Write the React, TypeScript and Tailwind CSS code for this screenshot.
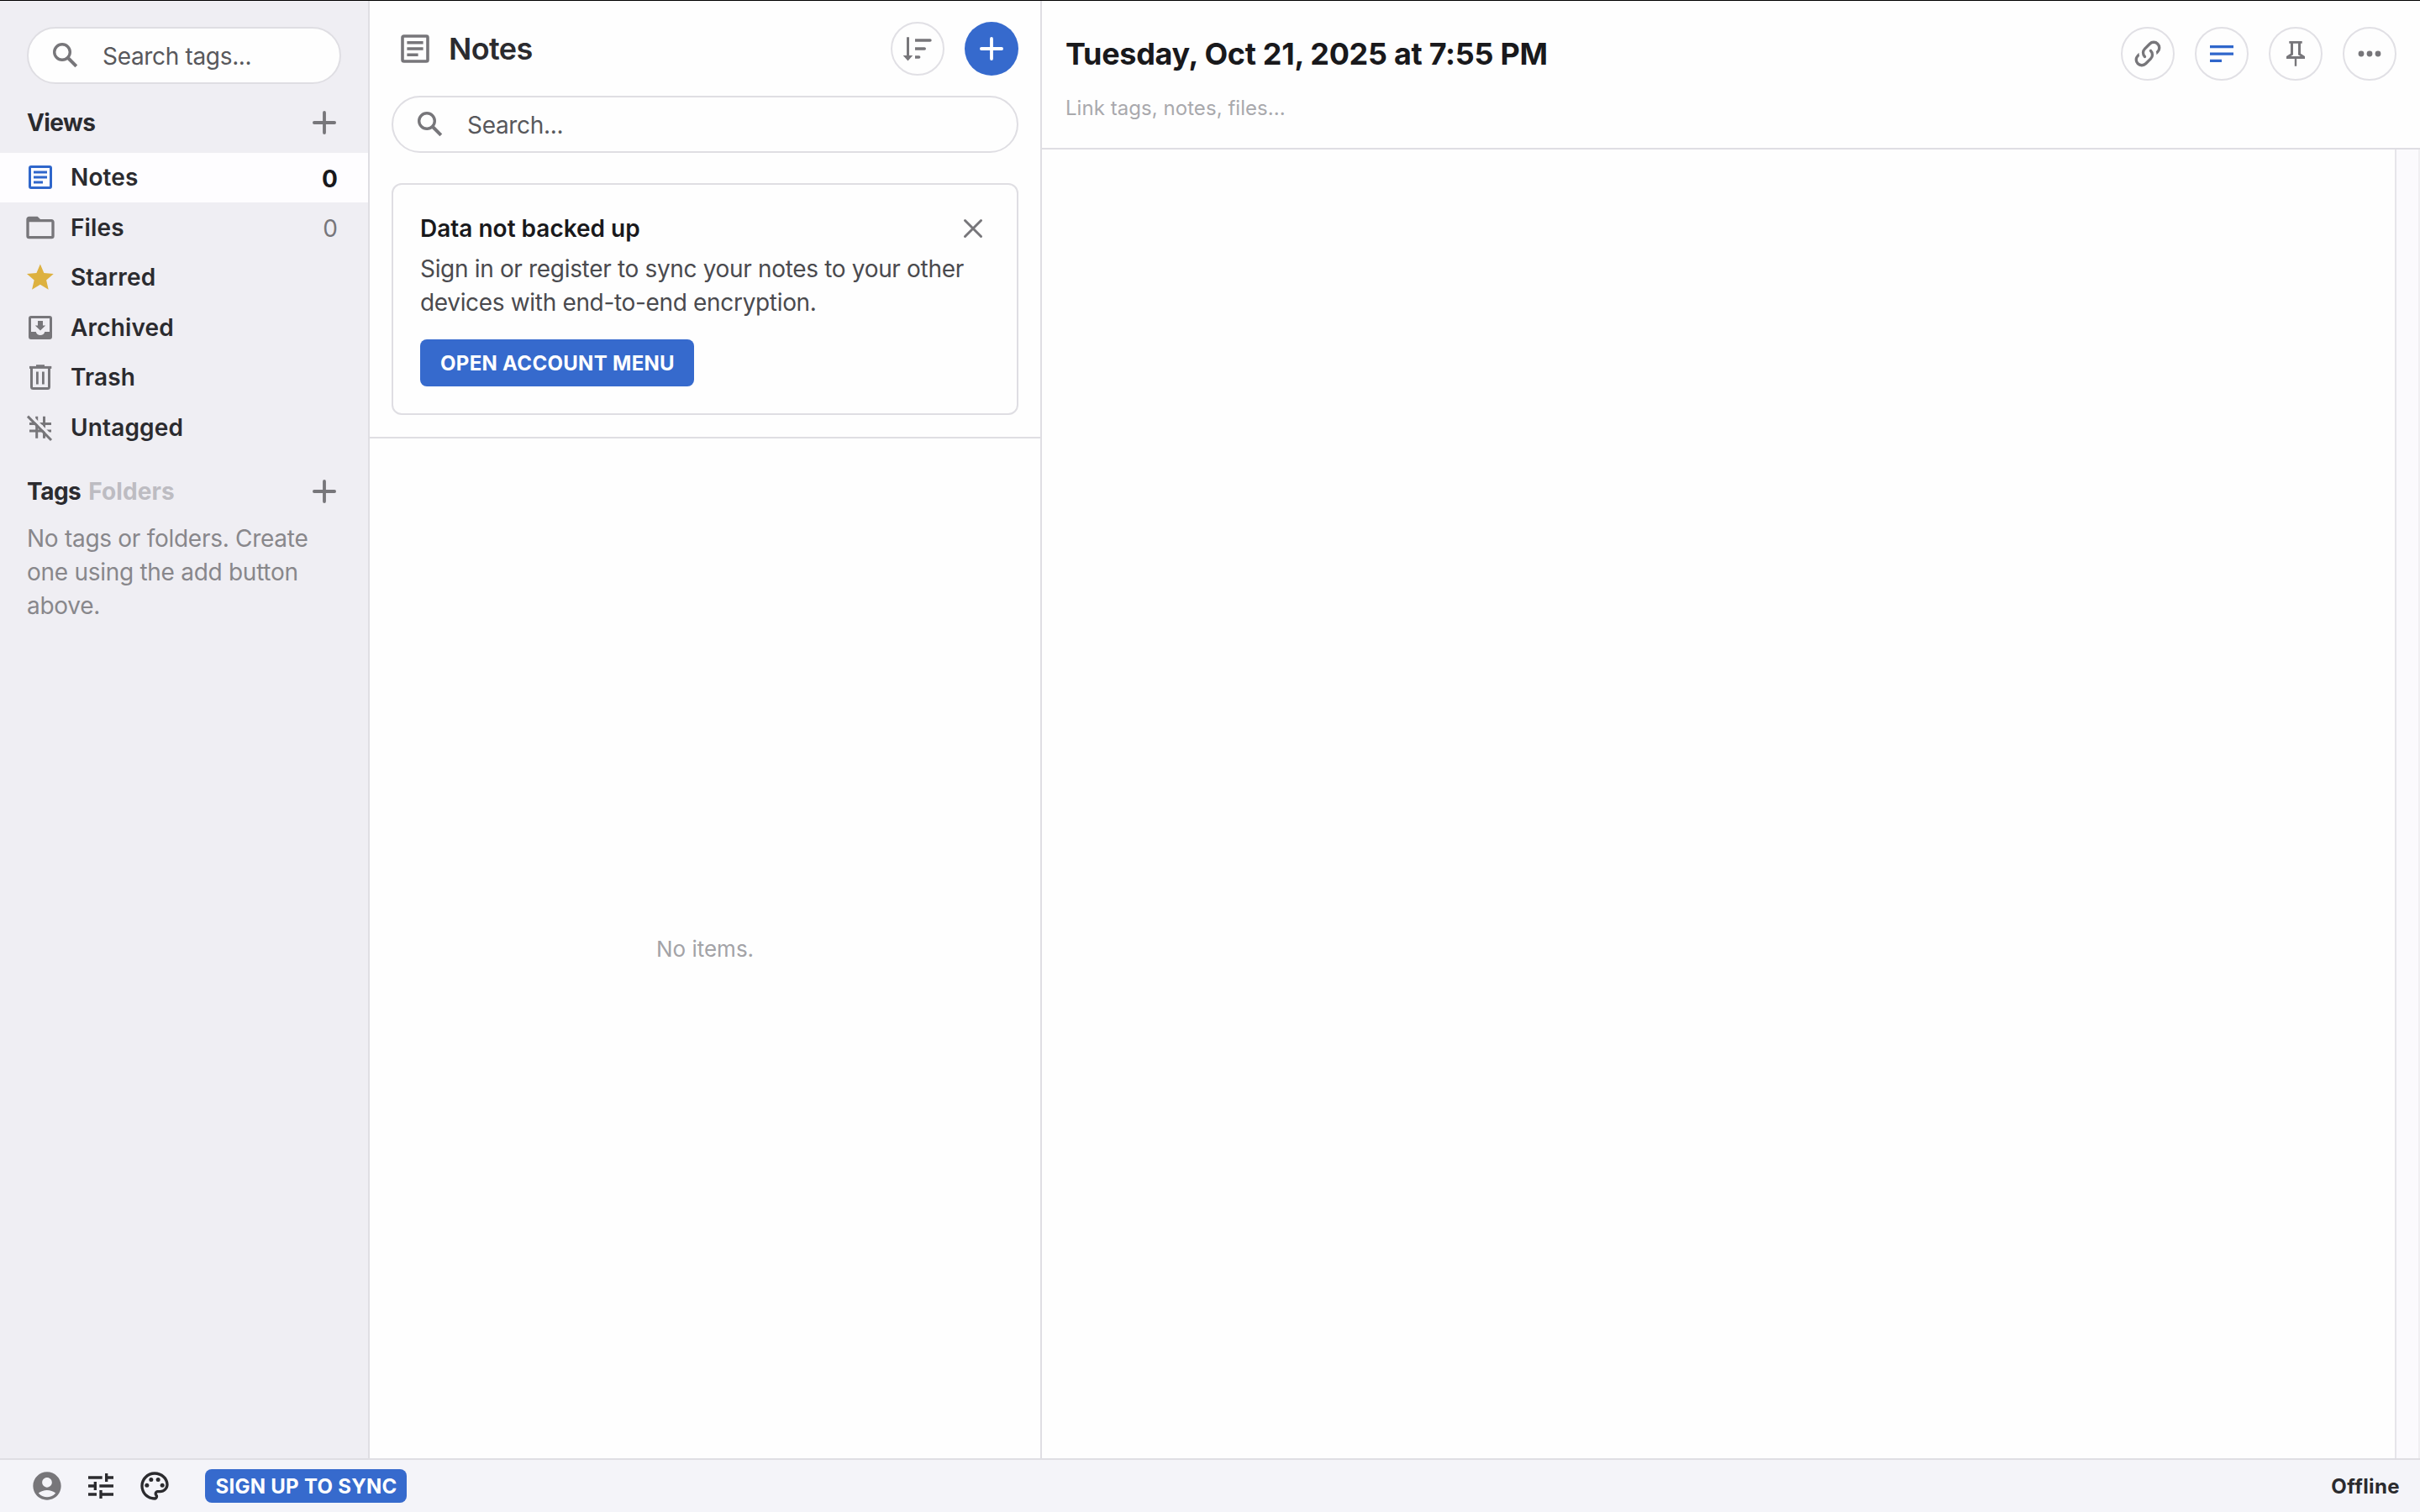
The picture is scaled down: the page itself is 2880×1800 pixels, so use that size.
import React from 'react';
import { MdAccountCircle, MdOutlinePalette, MdTune } from 'react-icons/md';

interface IconProps {
  className?: string;
}

const NotesIcon: React.FC<IconProps> = ({ className }) => (
  <svg viewBox="0 0 40 40" className={className} fill="none" stroke="currentColor">
    <rect x="7.5" y="7.5" width="25" height="25" rx="1.5" strokeWidth="3" />
    <path d="M12 14h16M12 20h16M12 26h11" strokeWidth="2.8" />
  </svg>
);

const FolderIcon: React.FC<IconProps> = ({ className }) => (
  <svg viewBox="0 0 24 24" className={className} fill="currentColor">
    <path d="M20 18H4V8h16m0-2h-8l-2-2H4c-1.11 0-2 .89-2 2v12a2 2 0 0 0 2 2h16a2 2 0 0 0 2-2V8c0-1.11-.9-2-2-2z" />
  </svg>
);

const StarIcon: React.FC<IconProps> = ({ className }) => (
  <svg viewBox="0 0 40 40" className={className} fill="currentColor">
    <path
      transform="translate(0.8 1.4) scale(1.59)"
      d="M12 17.27 18.18 21l-1.64-7.03L22 9.24l-7.19-.61L12 2 9.19 8.63 2 9.24l5.46 4.73L5.82 21z"
    />
  </svg>
);

const ArchiveIcon: React.FC<IconProps> = ({ className }) => (
  <svg viewBox="0 0 40 40" className={className} fill="currentColor">
    <path
      fillRule="evenodd"
      d="M9 6h22a3 3 0 0 1 3 3v22a3 3 0 0 1-3 3H9a3 3 0 0 1-3-3V9a3 3 0 0 1 3-3zm0 3v16h5.7a5.5 5.5 0 0 0 10.6 0H31V9z"
    />
    <path d="M17 12h6v5.5h3.2L20 23.6l-6.2-6.1H17z" />
  </svg>
);

const TrashIcon: React.FC<IconProps> = ({ className }) => (
  <svg viewBox="0 0 40 40" className={className} fill="none" stroke="currentColor">
    <path d="M7 8.4h26.3" strokeWidth="3" />
    <path d="M15 6.4h10" strokeWidth="2.4" />
    <path d="M9.5 9v22.5a2 2 0 0 0 2 2h17a2 2 0 0 0 2-2V9" strokeWidth="3" />
    <path d="M16.4 13.6v15M23.4 13.6v15" strokeWidth="2.8" />
  </svg>
);

const UntaggedIcon: React.FC<IconProps> = ({ className }) => (
  <svg viewBox="0 0 40 40" className={className} fill="none" stroke="currentColor" strokeWidth="3">
    <path d="M15.7 6.8v26M24.5 6.8v26M7 15.4h26M7 24h26" />
    <path d="M6.5 3.8l29 29" stroke="#efeef3" strokeWidth="3.4" />
    <path d="M5 6.6l28 28.4" />
  </svg>
);

const SearchIcon: React.FC<IconProps> = ({ className }) => (
  <svg viewBox="0 0 40 40" className={className} fill="none" stroke="currentColor">
    <circle cx="17" cy="16" r="9.3" strokeWidth="3.4" />
    <path d="M24 23l9.8 9.8" strokeWidth="4" />
  </svg>
);

const PlusIcon: React.FC<IconProps> = ({ className }) => (
  <svg viewBox="0 0 28 28" className={className} stroke="currentColor" strokeWidth="3.8" strokeLinecap="round">
    <path d="M14 1.9v24.2M1.9 14h24.2" />
  </svg>
);

const CloseIcon: React.FC<IconProps> = ({ className }) => (
  <svg viewBox="0 0 24 24" className={className} stroke="currentColor" strokeWidth="3" strokeLinecap="round">
    <path d="M2.5 2.5l19 19M21.5 2.5l-19 19" />
  </svg>
);

const SortIcon: React.FC<IconProps> = ({ className }) => (
  <svg viewBox="0 0 40 40" className={className} fill="currentColor">
    <path d="M7 6.3h3V28h4.2L8.5 34.5 2.7 28H7z" />
    <path d="M17 8.2h17.9a1.8 1.8 0 0 1 0 3.6H17zM17 18.2h11.2a1.8 1.8 0 0 1 0 3.6H17zM17 28.2h4.6a1.8 1.8 0 0 1 0 3.6H17z" />
  </svg>
);

const LinkIcon: React.FC<IconProps> = ({ className }) => (
  <svg viewBox="0 0 24 24" className={className} fill="currentColor">
    <path d="M10.59 13.41c.41.39.41 1.03 0 1.42-.39.39-1.03.39-1.42 0a5.003 5.003 0 0 1 0-7.07l3.54-3.54a5.003 5.003 0 0 1 7.07 0 5.003 5.003 0 0 1 0 7.07l-1.49 1.49c.01-.82-.12-1.64-.4-2.42l.47-.48a2.982 2.982 0 0 0 0-4.24 2.982 2.982 0 0 0-4.24 0l-3.53 3.53a2.982 2.982 0 0 0 0 4.24m2.82-4.24c.39-.39 1.03-.39 1.42 0a5.003 5.003 0 0 1 0 7.07l-3.54 3.54a5.003 5.003 0 0 1-7.07 0 5.003 5.003 0 0 1 0-7.07l1.49-1.49c-.01.82.12 1.64.4 2.43l-.47.47a2.982 2.982 0 0 0 0 4.24 2.982 2.982 0 0 0 4.24 0l3.53-3.53a2.982 2.982 0 0 0 0-4.24.973.973 0 0 1 0-1.42z" />
  </svg>
);

const TextLinesIcon: React.FC<IconProps> = ({ className }) => (
  <svg viewBox="0 0 40 40" className={className} fill="currentColor">
    <path d="M6 10h28v3.3H6zM6 18.4h28v3.3H6zM6 26.7h14V30H6z" />
  </svg>
);

const PinIcon: React.FC<IconProps> = ({ className }) => (
  <svg viewBox="0 0 40 40" className={className} fill="currentColor">
    <path
      fillRule="evenodd"
      d="M12.3 5h15.4v2.8H26v12l5 3.2v3h-9.8v8.8h-2.4V26H9v-3l5-3.2v-12h-1.7zM17 7.8v13.4L14.2 23h11.6L23 21.2V7.8z"
    />
  </svg>
);

const MoreIcon: React.FC<IconProps> = ({ className }) => (
  <svg viewBox="0 0 40 40" className={className} fill="currentColor">
    <circle cx="10" cy="20" r="3.4" />
    <circle cx="20" cy="20" r="3.4" />
    <circle cx="30" cy="20" r="3.4" />
  </svg>
);

const views = [
  { label: 'Notes', icon: NotesIcon, iconClass: 'text-[#2f66cb]', count: 0, selected: true },
  { label: 'Files', icon: FolderIcon, iconClass: 'text-[#77767a]', count: 0 },
  { label: 'Starred', icon: StarIcon, iconClass: 'text-[#ddb13f]' },
  { label: 'Archived', icon: ArchiveIcon, iconClass: 'text-[#77767a]' },
  { label: 'Trash', icon: TrashIcon, iconClass: 'text-[#77767a]' },
  { label: 'Untagged', icon: UntaggedIcon, iconClass: 'text-[#77767a]' },
];

const SearchBox: React.FC<{ placeholder: string }> = ({ placeholder }) => (
  <div className="flex h-[68px] items-center rounded-full border-2 border-[#dfdee3] bg-[#fefefe] pl-[23px]">
    <SearchIcon className="size-10 text-[#77767a]" />
    <span className="ml-[25px] pt-px text-[28px] tracking-[-0.33px] text-[#58585c]">{placeholder}</span>
  </div>
);

const RoundButton: React.FC<{ label: string; children: React.ReactNode }> = ({ label, children }) => (
  <button
    aria-label={label}
    className="flex size-16 items-center justify-center rounded-full border-2 border-[#e1e0e5] text-[#77767a]"
  >
    {children}
  </button>
);

const Sidebar = () => (
  <aside className="flex w-[440px] shrink-0 flex-col border-r-2 border-[#dfdee3] bg-[#efeef3] pt-[31px]">
    <div className="px-8">
      <SearchBox placeholder="Search tags..." />
    </div>

    <div className="flex h-[81.6px] items-center justify-between pt-[10px] pr-[38px] pl-8">
      <h2 className="text-[28px] font-bold tracking-[-0.6px]">Views</h2>
      <PlusIcon className="size-7 text-[#77767a]" />
    </div>

    <nav>
      {views.map(({ label, icon: Icon, iconClass, count, selected }) => (
        <div
          key={label}
          className={`flex h-[59.5px] items-center pr-[36px] pl-7 ${selected ? 'bg-[#fefdff]' : ''}`}
        >
          <Icon className={`size-10 ${iconClass}`} />
          <span className="ml-4 flex-1 text-[28px] font-semibold tracking-[0.15px]">{label}</span>
          {count !== undefined && (
            <span
              className={`pt-[3px] text-[28px] ${selected ? 'font-bold text-[#19191c]' : 'text-[#77767a]'}`}
            >
              {count}
            </span>
          )}
        </div>
      ))}
    </nav>

    <div className="flex h-[82.4px] items-center pt-[10px] pr-[38px] pl-8 text-[28px] font-bold">
      <h2 className="tracking-[-0.5px]">Tags</h2>
      <span className="ml-[9px] flex-1 tracking-[0.1px] text-[#bdbcc2]">Folders</span>
      <PlusIcon className="size-7 text-[#77767a]" />
    </div>
    <p className="pr-6 pl-8 text-[28px] leading-10 tracking-[-0.28px] text-[#88878b]">
      No tags or folders. Create
      <br />
      one using the add button
      <br />
      above.
    </p>
  </aside>
);

const ItemList = () => (
  <section className="flex w-[800px] shrink-0 flex-col border-r-2 border-[#dfdee3]">
    <div className="border-b-2 border-[#dfdee3] px-[26px] pt-[25px] pb-[26px]">
      <div className="mb-6 flex items-center gap-6">
        <div className="flex flex-1 items-center gap-4 pl-1">
          <NotesIcon className="size-12 text-[#77767a]" />
          <h1 className="text-4xl font-semibold tracking-[-0.6px]">Notes</h1>
        </div>
        <RoundButton label="Sort">
          <SortIcon className="size-10" />
        </RoundButton>
        <button
          aria-label="Create note"
          className="flex size-16 items-center justify-center rounded-full bg-[#366acd] text-white"
        >
          <PlusIcon className="size-7" />
        </button>
      </div>

      <SearchBox placeholder="Search..." />

      <div className="mt-9 rounded-xl border-2 border-[#dfdee3] p-8">
        <div className="flex items-center justify-between">
          <h2 className="text-[28px] leading-10 font-semibold text-[#19191c]">Data not backed up</h2>
          <CloseIcon className="mr-2 size-6 text-[#77767a]" />
        </div>
        <p className="mt-2 text-[28px] leading-10 tracking-[-0.33px] text-[#4a4a4e]">
          Sign in or register to sync your notes to your other
          <br />
          devices with end-to-end encryption.
        </p>
        <button className="mt-6 flex h-14 w-[326px] items-center justify-center rounded-lg bg-[#366acd] pt-0.5 pl-px text-2xl font-bold tracking-[0.3px] text-white">
          OPEN ACCOUNT MENU
        </button>
      </div>
    </div>

    <div className="flex flex-1 items-center justify-center text-[26px] text-[#a3a3a7]">No items.</div>
  </section>
);

const Editor = () => (
  <main className="flex flex-1 flex-col">
    <header className="h-[177px] border-b-2 border-[#dfdee3] px-7 pt-[31px]">
      <div className="flex items-center gap-6">
        <h1 className="flex-1 text-4xl font-bold tracking-[-0.3px] text-[#19191c]">
          Tuesday, Oct 21, 2025 at 7:55 PM
        </h1>
        <RoundButton label="Link">
          <LinkIcon className="size-10" />
        </RoundButton>
        <RoundButton label="Note type">
          <TextLinesIcon className="size-10 text-[#2f66cb]" />
        </RoundButton>
        <RoundButton label="Pin">
          <PinIcon className="size-10" />
        </RoundButton>
        <RoundButton label="More">
          <MoreIcon className="size-10" />
        </RoundButton>
      </div>
      <div className="mt-[17px] text-2xl tracking-[0.05px] text-[#a9a9ad]">Link tags, notes, files...</div>
    </header>
    <div className="flex flex-1 justify-end">
      <div className="w-[30px] border-x-2 border-r-[#f0eff2] border-l-[#e6e5ea] bg-[#fbfafd]" />
    </div>
  </main>
);

const Footer = () => (
  <footer className="flex h-16 items-center border-t-2 border-[#dfdee3] bg-[#f4f4f9] pr-6 pl-9">
    <div className="flex gap-6">
      <MdAccountCircle className="size-10 text-[#77767a]" />
      <MdTune className="size-10" />
      <MdOutlinePalette className="size-10" />
    </div>
    <button className="ml-10 flex h-10 w-60 items-center justify-center rounded-lg bg-[#366acd] pt-0.5 pl-px text-2xl font-bold tracking-[0.28px] text-white">
      SIGN UP TO SYNC
    </button>
    <span className="ml-auto pt-0.5 text-2xl font-bold tracking-[0.4px]">Offline</span>
  </footer>
);

export default function App() {
  return (
    <div className="flex h-[1800px] w-[2880px] flex-col overflow-hidden border-t border-black bg-[#fefefe] font-['Inter',sans-serif] text-[#2b2b2f]">
      <div className="flex min-h-0 flex-1">
        <Sidebar />
        <ItemList />
        <Editor />
      </div>
      <Footer />
    </div>
  );
}
